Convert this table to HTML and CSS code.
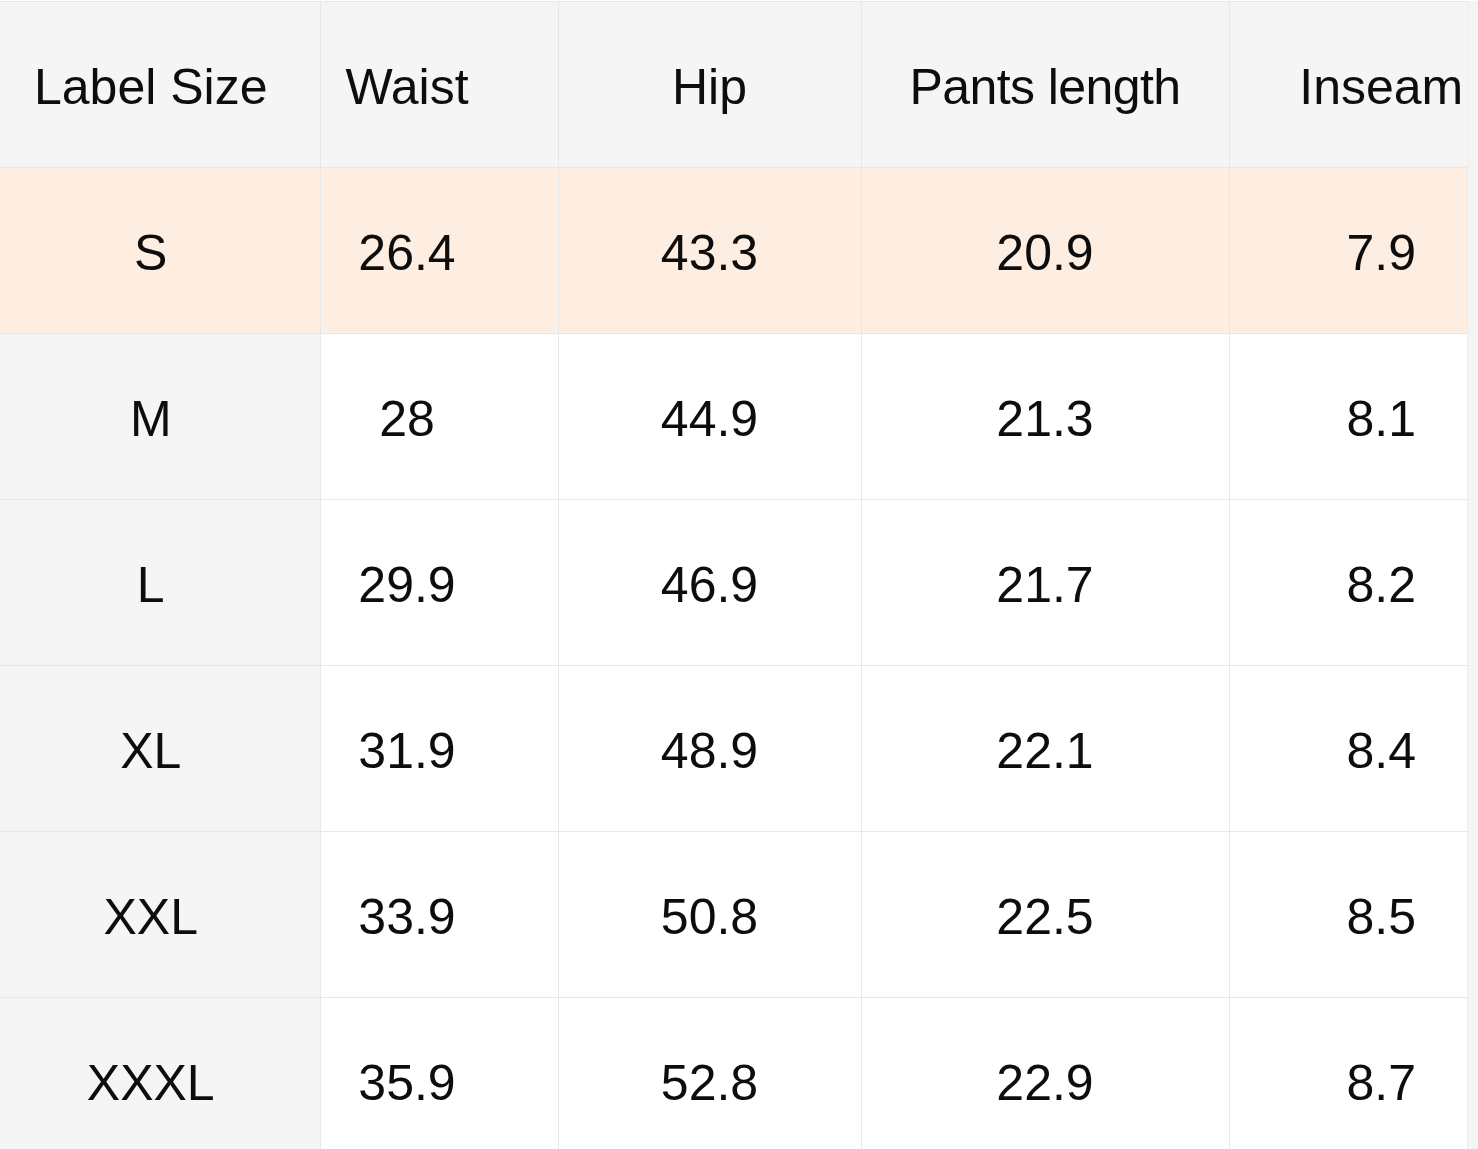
FILE: index.html
```html
<!DOCTYPE html>
<html lang="en">
<head>
<meta charset="utf-8">
<title>Size Chart</title>
<link rel="stylesheet" href="styles.css">
</head>
<body>
<div class="page">
  <table class="chart">
    <colgroup>
      <col class="c1"><col class="c2"><col class="c3"><col class="c4"><col class="c5">
    </colgroup>
    <thead>
      <tr>
        <th class="k1">Label Size</th>
        <th class="k2">Waist</th>
        <th>Hip</th>
        <th class="k4">Pants length</th>
        <th class="k5">Inseam</th>
      </tr>
    </thead>
    <tbody>
      <tr class="hl"><td class="k1">S</td><td class="k2">26.4</td><td>43.3</td><td>20.9</td><td class="k5">7.9</td></tr>
      <tr><td class="k1">M</td><td class="k2">28</td><td>44.9</td><td>21.3</td><td class="k5">8.1</td></tr>
      <tr><td class="k1">L</td><td class="k2">29.9</td><td>46.9</td><td>21.7</td><td class="k5">8.2</td></tr>
      <tr><td class="k1">XL</td><td class="k2">31.9</td><td>48.9</td><td>22.1</td><td class="k5">8.4</td></tr>
      <tr><td class="k1">XXL</td><td class="k2">33.9</td><td>50.8</td><td>22.5</td><td class="k5">8.5</td></tr>
      <tr class="last"><td class="k1">XXXL</td><td class="k2">35.9</td><td>52.8</td><td>22.9</td><td class="k5">8.7</td></tr>
    </tbody>
  </table>
  <div class="edge"></div>
</div>
</body>
</html>
```

FILE: styles.css
```css
html, body {
  margin: 0;
  padding: 0;
  background: #ffffff;
}
body {
  font-family: "Liberation Sans", Arial, sans-serif;
  color: #0d0d0d;
  overflow: hidden;
  height: 1149px;
}
.page {
  display: flex;
  align-items: stretch;
  height: 1149px;
  padding-top: 1px;
  box-sizing: border-box;
}
.edge {
  width: 10px;
  background: #f4f4f4;
  border-left: 1px solid #ececec;
}
.chart {
  width: 1467px;
  table-layout: fixed;
  border-collapse: collapse;
  font-size: 50px;
  align-self: flex-start;
}
.c1 { width: 320px; }
.c2 { width: 238px; }
.c3 { width: 303px; }
.c4 { width: 368px; }
.c5 { width: 238px; }
.chart th, .chart td {
  border: 1px solid #e7e7e7;
  text-align: center;
  vertical-align: middle;
  padding: 4px 0 0 0;
  font-weight: normal;
  box-sizing: border-box;
}
.chart th {
  height: 166px;
  background: #f5f5f5;
}
.chart td {
  height: 166px;
  background: #ffffff;
}
.chart td.k1 { background: #f5f5f5; }
.chart .k1 { padding-right: 18px; border-left: none; }
.chart .k2 { padding-right: 64px; }
.chart th.k4 { letter-spacing: -0.6px; }
.chart .k5 { padding-left: 66px; border-right: none; }
.chart tr.hl td { background: #fdeee1; }
.chart tr.last td { border-bottom: none; }
```
